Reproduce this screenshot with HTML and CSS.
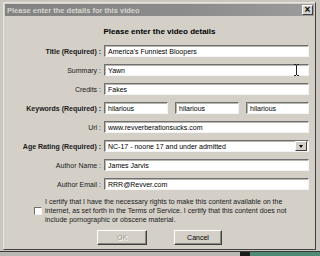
FILE: index.html
```html
<!DOCTYPE html>
<html lang="en">
<head>
  <meta charset="UTF-8">
  <meta name="viewport" content="width=device-width, initial-scale=1.0">
  <title>Video Details</title>
  <link rel="stylesheet" href="styles.css">
</head>
<body>
  <div class="window">
    <!-- Title bar -->
    <div class="titlebar">
      <span class="title-text">Please enter the details for this video</span>
      <span class="close-btn">&times;</span>
    </div>

    <div class="content">
      <h1 class="heading">Please enter the video details</h1>

      <!-- Form rows -->
      <div class="form-grid">
        <label class="label bold">Title (Required) :</label>
        <div class="field">America's Funniest Bloopers</div>

        <label class="label">Summary :</label>
        <div class="field">Yawn
          <svg class="cursor" width="5" height="12" viewBox="0 0 5 12">
            <path d="M0 0.5h2M3 0.5h2M2.5 1v10M0 11.5h2M3 11.5h2" stroke="#222" stroke-width="1" fill="none"/>
          </svg>
        </div>

        <label class="label">Credits :</label>
        <div class="field">Fakes</div>

        <label class="label bold">Keywords (Required) :</label>
        <div class="keywords">
          <div class="field">hilarious</div>
          <div class="field">hilarious</div>
          <div class="field">hilarious</div>
        </div>

        <label class="label">Url :</label>
        <div class="field">www.revverberationsucks.com</div>

        <label class="label bold">Age Rating (Required) :</label>
        <div class="field select">
          <span>NC-17 - noone 17 and under admitted</span>
          <span class="drop-btn"><span class="arrow"></span></span>
        </div>

        <label class="label">Author Name :</label>
        <div class="field">James Jarvis</div>

        <label class="label">Author Email :</label>
        <div class="field">RRR@Revver.com</div>
      </div>

      <!-- Terms -->
      <div class="terms">
        <span class="checkbox"></span>
        <p class="terms-text">I certify that I have the necessary rights to make this content available on the internet, as set forth in the Terms of Service. I certify that this content does not include pornographic or obscene material.</p>
      </div>

      <!-- Buttons -->
      <div class="buttons">
        <span class="button disabled">OK</span>
        <span class="button">Cancel</span>
      </div>
    </div>
  </div>

  <div class="taskbar">
    <span class="task-dark"></span>
    <span class="task-green"></span>
  </div>
</body>
</html>
```

FILE: styles.css
```css
body {
  margin: 0;
  width: 320px;
  height: 256px;
  overflow: hidden;
  background-color: #c9c6c0;
  font-family: "Liberation Sans", Arial, sans-serif;
  font-size: 7px;
  color: #000;
}

.window {
  margin: 2px 4px 0 3px;
  height: 248px;
  box-sizing: border-box;
  background-color: #d4d0c8;
  border: 1px solid;
  border-color: #e8e6e1 #404040 #404040 #e8e6e1;
}

.titlebar {
  height: 12px;
  margin: 1px;
  display: flex;
  align-items: center;
  justify-content: space-between;
  background: linear-gradient(to right, #828282, #8c8c8c 60%, #9c9c9c);
}

.title-text {
  padding-left: 2px;
  font-weight: bold;
  font-size: 7.5px;
  color: #d8d5cf;
}

.close-btn {
  width: 9px;
  height: 8px;
  margin-right: 1px;
  display: flex;
  align-items: center;
  justify-content: center;
  background-color: #d4d0c8;
  border: 1px solid;
  border-color: #fff #404040 #404040 #fff;
  font-size: 10px;
  font-weight: bold;
  line-height: 1;
}

.content {
  padding-top: 10px;
}

.heading {
  margin: 0 0 8px;
  text-align: center;
  font-size: 8px;
  font-weight: bold;
  line-height: 10px;
}

.form-grid {
  display: grid;
  grid-template-columns: 97px 205px;
  grid-auto-rows: 12px;
  column-gap: 3px;
  row-gap: 7px;
}

.label {
  display: flex;
  align-items: center;
  justify-content: flex-end;
  color: #1a1a1a;
}

.bold {
  font-weight: bold;
}

.field {
  position: relative;
  display: flex;
  align-items: center;
  box-sizing: border-box;
  height: 12px;
  padding-left: 3px;
  background-color: #fff;
  border: 1px solid;
  border-color: #6f6f6f #f4f4f4 #f4f4f4 #6f6f6f;
  box-shadow: inset 1px 1px 0 #b8b5ae;
  white-space: nowrap;
  overflow: visible;
}

.cursor {
  position: absolute;
  left: 189px;
  top: -1px;
}

.keywords {
  display: grid;
  grid-template-columns: 64px 64px 63px;
  column-gap: 7px;
}

.select {
  justify-content: space-between;
  padding-right: 1px;
}

.drop-btn {
  width: 10px;
  height: 8px;
  display: flex;
  align-items: center;
  justify-content: center;
  background-color: #d4d0c8;
  border: 1px solid;
  border-color: #fff #404040 #404040 #fff;
}

.arrow {
  width: 0;
  height: 0;
  border-left: 2.5px solid transparent;
  border-right: 2.5px solid transparent;
  border-top: 3px solid #000;
}

.terms {
  display: flex;
  align-items: center;
  margin: 7px 0 0 30px;
}

.checkbox {
  flex: none;
  width: 8px;
  height: 8px;
  box-sizing: border-box;
  background-color: #fff;
  border: 1px solid;
  border-color: #707070 #f4f4f4 #f4f4f4 #707070;
  margin-right: 3px;
}

.terms-text {
  margin: 0;
  width: 258px;
  line-height: 9px;
  color: #1a1a1a;
}

.buttons {
  display: flex;
  justify-content: center;
  gap: 27px;
  margin-top: 6px;
}

.button {
  width: 50px;
  height: 15px;
  box-sizing: border-box;
  display: flex;
  align-items: center;
  justify-content: center;
  background-color: #d4d0c8;
  border: 1px solid;
  border-color: #fff #404040 #404040 #fff;
  box-shadow: inset -1px -1px 0 #8a8780;
}

.button + .button {
  width: 48px;
}

.disabled {
  color: #9a978f;
  text-shadow: 1px 1px 0 #fff;
}

.taskbar {
  display: flex;
  height: 6px;
  margin-top: 1px;
  border-top: 1px solid #3a3a3a;
  background-color: #b8b8b4;
}

.task-dark {
  margin-left: 240px;
  width: 10px;
  background-color: #1c1c1c;
}

.task-green {
  flex: 1;
  background-color: #4f8a74;
}
```
